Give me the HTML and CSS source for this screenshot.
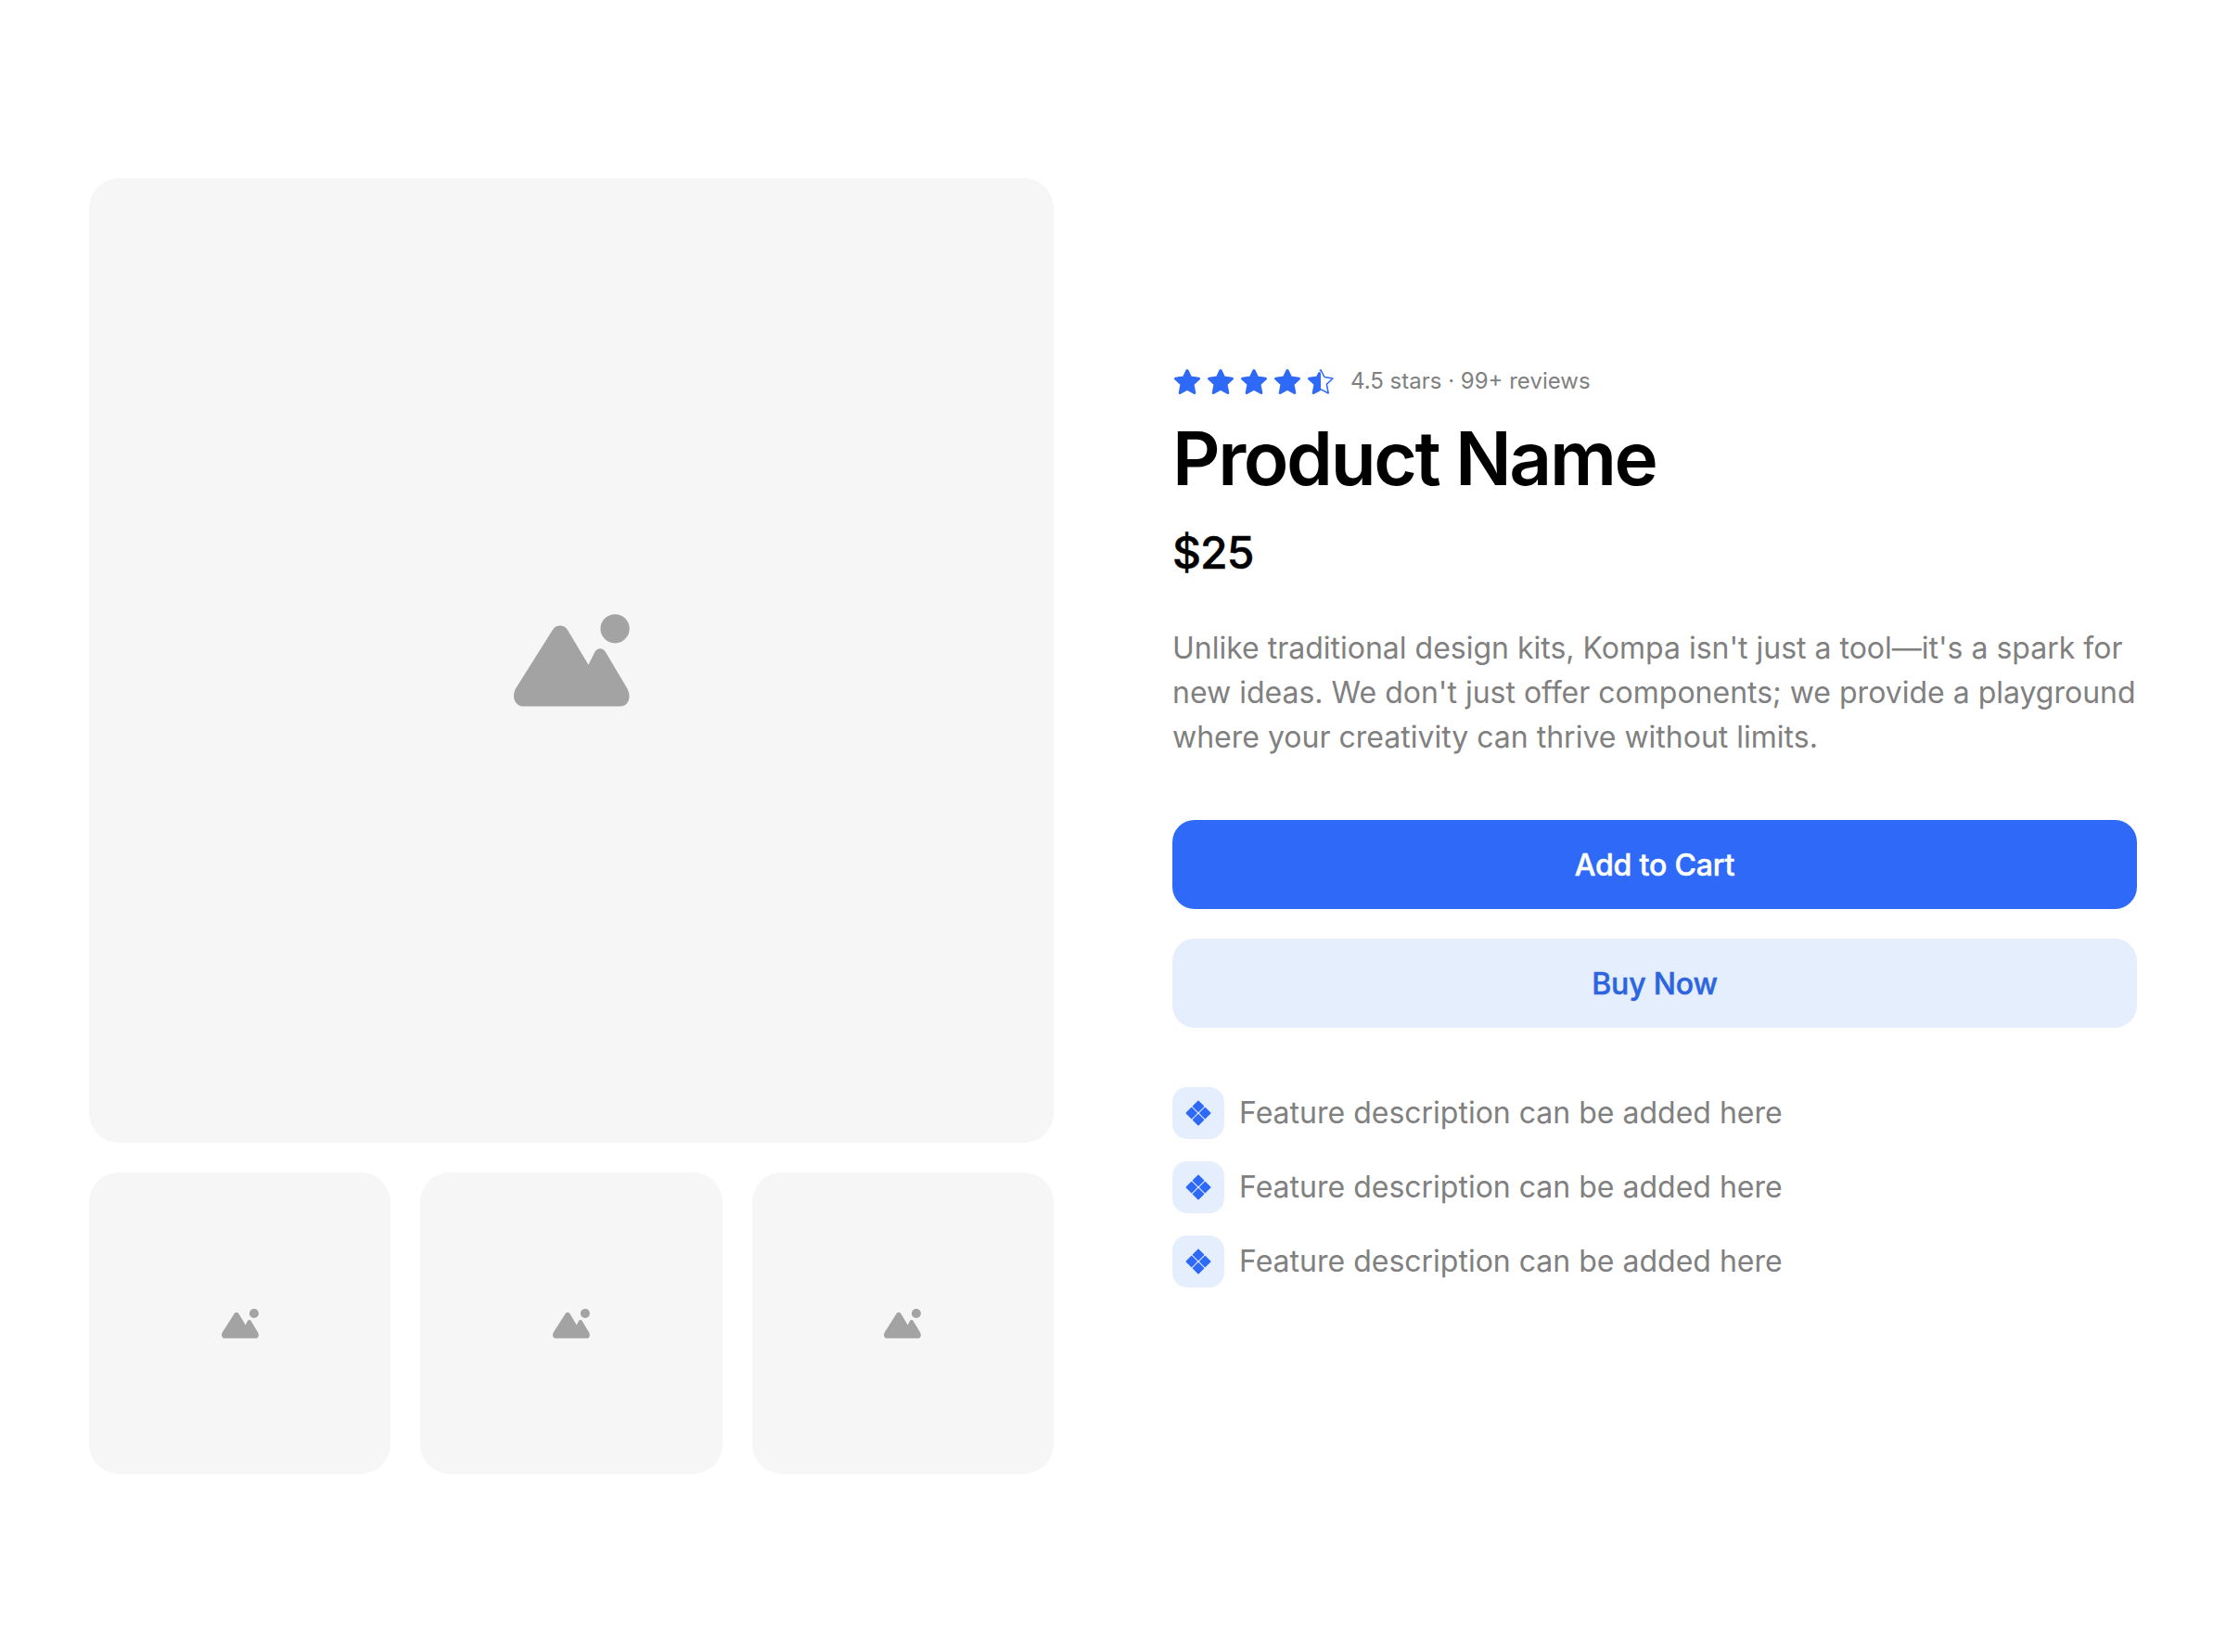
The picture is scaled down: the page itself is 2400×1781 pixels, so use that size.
FILE: index.html
```html
<!DOCTYPE html>
<html lang="en">
<head>
    <meta charset="UTF-8">
    <meta name="viewport" content="width=device-width, initial-scale=1.0">
    <title>Product Name</title>
    <link rel="stylesheet" href="styles.css">
</head>
<body>
    <svg class="sprites" width="0" height="0" aria-hidden="true">
        <symbol id="mountain" viewBox="100 66 376 300">
            <circle cx="428" cy="113" r="47"/>
            <path d="M132 365C104 365 90 334 108 304L226 117C237 99 263 99 274 117L342 230L362 190C370 174 390 174 398 190L466 304C484 334 472 365 444 365Z"/>
        </symbol>
        <symbol id="star" viewBox="0 0 32 32">
            <path d="M16 4.500L19.600 11.900L28.500 13.200L22 19.200L23.800 28.500L16 24.300L8.200 28.500L10 19.200L3.500 13.200L12.400 11.900Z" stroke-width="3" stroke-linejoin="round"/>
        </symbol>
        <symbol id="half-star" viewBox="0 0 32 32">
            <path d="M15 5L16 3.800L20 11.500L29 13L22.400 19.300L24.200 29L16 24.700" fill="none" stroke-width="1.500" stroke-linejoin="round"/>
            <path d="M14.500 7.600L12.400 11.900L3.500 13.200L10 19.200L8.200 28.500L14.500 25.100Z" stroke-width="3" stroke-linejoin="round"/>
        </symbol>
        <symbol id="diamonds" viewBox="0 0 32 32">
            <path d="M16 3.200L21.500 8.700L16 14.200L10.500 8.700Z M16 17.800L21.500 23.300L16 28.800L10.500 23.300Z M8.700 10.500L14.200 16L8.700 21.500L3.200 16Z M23.300 10.500L28.800 16L23.300 21.500L17.800 16Z" stroke-width="1.500" stroke-linejoin="round"/>
        </symbol>
    </svg>

    <div class="product">
        <div class="gallery">
            <div class="image image-main">
                <svg class="image-icon"><use href="#mountain"/></svg>
            </div>
            <div class="thumbs">
                <div class="image"><svg class="thumb-icon"><use href="#mountain"/></svg></div>
                <div class="image"><svg class="thumb-icon"><use href="#mountain"/></svg></div>
                <div class="image"><svg class="thumb-icon"><use href="#mountain"/></svg></div>
            </div>
        </div>

        <div class="details">
            <div class="rating">
                <div class="stars">
                    <svg class="star"><use href="#star"/></svg>
                    <svg class="star"><use href="#star"/></svg>
                    <svg class="star"><use href="#star"/></svg>
                    <svg class="star"><use href="#star"/></svg>
                    <svg class="star"><use href="#half-star"/></svg>
                </div>
                <span class="rating-text">4.5 stars · 99+ reviews</span>
            </div>
            <h1 class="name">Product Name</h1>
            <div class="price">$25</div>
            <p class="description">Unlike traditional design kits, Kompa isn't just a tool—it's a spark for new ideas. We don't just offer components; we provide a playground where your creativity can thrive without limits.</p>
            <div class="actions">
                <button class="btn btn-primary">Add to Cart</button>
                <button class="btn btn-secondary">Buy Now</button>
            </div>
            <ul class="features">
                <li class="feature"><span class="feature-icon"><svg class="diamonds"><use href="#diamonds"/></svg></span>Feature description can be added here</li>
                <li class="feature"><span class="feature-icon"><svg class="diamonds"><use href="#diamonds"/></svg></span>Feature description can be added here</li>
                <li class="feature"><span class="feature-icon"><svg class="diamonds"><use href="#diamonds"/></svg></span>Feature description can be added here</li>
            </ul>
        </div>
    </div>
</body>
</html>
```

FILE: styles.css
```css
body {
    font-family: Inter, 'Liberation Sans', sans-serif;
    margin: 0;
    background-color: #fff;
    color: #000;
}
.sprites {
    display: block;
    height: 0;
}
.product {
    display: grid;
    grid-template-columns: 1040px 1040px;
    gap: 128px;
    padding: 192px 96px;
}
.gallery {
    display: flex;
    flex-direction: column;
    gap: 32px;
}
.image {
    display: flex;
    align-items: center;
    justify-content: center;
    aspect-ratio: 1;
    background: #f6f6f6;
    border-radius: 32px;
}
.thumbs {
    display: grid;
    grid-template-columns: repeat(3, 1fr);
    gap: 32px;
}
.image-icon {
    width: 125px;
    height: 100px;
    fill: #a3a3a3;
}
.thumb-icon {
    width: 40px;
    height: 32px;
    fill: #a3a3a3;
}
.details {
    display: flex;
    flex-direction: column;
    justify-content: center;
}
.rating {
    display: flex;
    align-items: center;
    gap: 16px;
}
.stars {
    display: flex;
    gap: 4px;
}
.star {
    width: 32px;
    height: 32px;
    fill: #2e69f8;
    stroke: #2e69f8;
}
.rating-text {
    font-size: 24px;
    line-height: 36px;
    color: #808080;
}
.name {
    font-size: 80px;
    font-weight: 600;
    line-height: 96px;
    letter-spacing: -0.03em;
    margin: 17px 0 0;
}
.price {
    font-size: 48px;
    font-weight: 500;
    line-height: 56px;
    letter-spacing: -0.02em;
    -webkit-text-stroke: 0.5px;
    margin-top: 26px;
}
.description {
    font-size: 32px;
    line-height: 48px;
    color: #808080;
    margin: 51px 0 0;
}
.actions {
    display: flex;
    flex-direction: column;
    gap: 32px;
    margin-top: 65px;
}
.btn {
    font-family: inherit;
    font-size: 32px;
    font-weight: 500;
    letter-spacing: -0.005em;
    -webkit-text-stroke: 0.5px;
    height: 96px;
    border: 0;
    border-radius: 24px;
}
.btn-primary {
    background: #2e69f8;
    color: #fff;
}
.btn-secondary {
    background: #e4eefd;
    color: #2d65e0;
}
.features {
    list-style: none;
    display: flex;
    flex-direction: column;
    gap: 24px;
    margin: 64px 0 0;
    padding: 0;
}
.feature {
    display: flex;
    align-items: center;
    gap: 16px;
    font-size: 32px;
    line-height: 48px;
    color: #808080;
}
.feature-icon {
    display: flex;
    align-items: center;
    justify-content: center;
    width: 56px;
    height: 56px;
    background: #e4eefd;
    border-radius: 16px;
}
.diamonds {
    width: 32px;
    height: 32px;
    fill: #2e69f8;
    stroke: #2e69f8;
}
```
